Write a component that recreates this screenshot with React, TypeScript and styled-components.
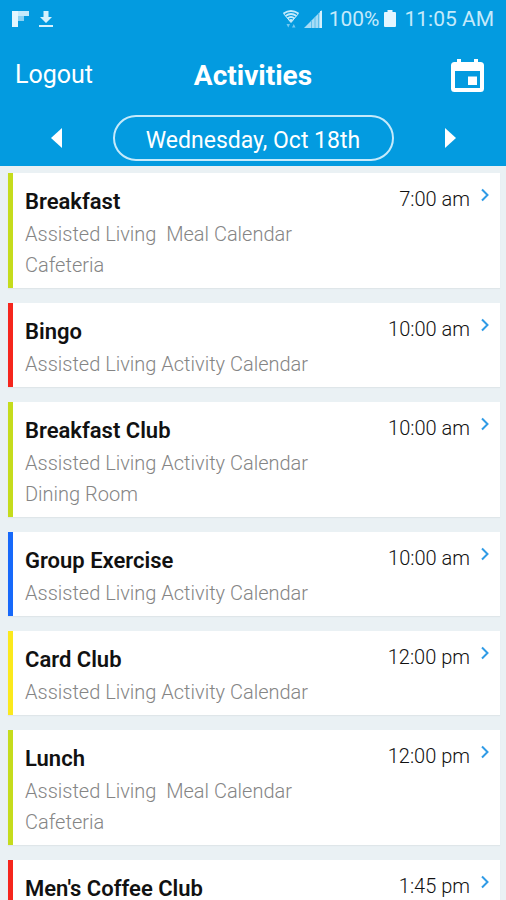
import React from "react";
import styled, { createGlobalStyle } from "styled-components";

const GlobalStyle = createGlobalStyle`
  * { box-sizing: border-box; }
  body {
    margin: 0;
    font-family: Roboto, "Liberation Sans", sans-serif;
    background: #eaf1f4;
  }
  button { font-family: inherit; }
`;

const Screen = styled.div`
  display: flex;
  flex-direction: column;
  height: 100vh;
`;

const Header = styled.header`
  flex: none;
  background: #039be0;
  color: #fff;
`;

const StatusBar = styled.div`
  display: flex;
  align-items: center;
  justify-content: space-between;
  height: 37px;
  padding: 0 12px;
  color: #c5eafb;
  font-size: 21px;
  line-height: 24px;
`;

const StatusGroup = styled.div<{ $gap: number }>`
  display: flex;
  align-items: center;
  gap: ${(p) => p.$gap}px;
`;

const Percent = styled.span`
  margin-left: 2px;
`;

const Clock = styled.span`
  margin-left: 3px;
`;

const NavBar = styled.nav`
  display: grid;
  grid-template-columns: 1fr auto 1fr;
  align-items: center;
  height: 77px;
  padding: 0 15px;
`;

const PlainButton = styled.button`
  display: flex;
  align-items: center;
  justify-content: center;
  padding: 0;
  border: 0;
  background: none;
  color: inherit;
  cursor: pointer;
`;

const LogoutButton = styled(PlainButton)`
  justify-self: start;
  padding-bottom: 1px;
  font-size: 25px;
  line-height: 32px;
`;

const CalendarButton = styled(PlainButton)`
  justify-self: end;
  padding-right: 7px;
`;

const PageTitle = styled.h1`
  margin: 0;
  font-size: 28px;
  line-height: 32px;
  font-weight: 700;
`;

const DateBar = styled.div`
  display: flex;
  align-items: center;
  justify-content: space-between;
  height: 52px;
  padding: 0 44px 4px;
`;

const ArrowButton = styled(PlainButton)`
  width: 24px;
  height: 44px;
`;

const DateButton = styled(PlainButton)`
  width: 68%;
  max-width: 281px;
  height: 46px;
  padding-top: 6px;
  border: 2px solid #c5eafb;
  border-radius: 23px;
  font-size: 23px;
  line-height: 28px;
`;

const List = styled.ul`
  flex: 1;
  min-height: 0;
  display: flex;
  flex-direction: column;
  gap: 15px;
  margin: 0;
  padding: 7px 6px 0 8px;
  list-style: none;
  overflow-y: auto;
  scrollbar-width: none;
`;

const Card = styled.li<{ $color: string }>`
  flex: none;
  display: flex;
  justify-content: space-between;
  padding: 12px 10px 7px 12px;
  border-left: 5px solid ${(p) => p.$color};
  background: #fff;
  box-shadow: 0 1px 1px #dfe6e9;
`;

const CardTitle = styled.h2`
  margin: 0;
  font-size: 22px;
  line-height: 34px;
  font-weight: 600;
  color: #111;
`;

const Detail = styled.p`
  margin: 0;
  font-size: 20px;
  line-height: 31px;
  font-weight: 300;
  color: #858585;
  white-space: pre-wrap;
`;

const When = styled.div`
  display: flex;
  align-items: flex-start;
  gap: 10px;
`;

const Time = styled.time`
  font-size: 20px;
  line-height: 28px;
  font-weight: 300;
  color: #111;
`;

const Chevron = styled.svg`
  margin-top: 3px;
`;

const COLORS = {
  meal: "#c5dc1c",
  game: "#f5261d",
  exercise: "#1769fa",
  cards: "#fbe91d",
};

const ACTIVITY = "Assisted Living Activity Calendar";
const MEAL = "Assisted Living  Meal Calendar";

const events = [
  { title: "Breakfast", time: "7:00 am", color: COLORS.meal, details: [MEAL, "Cafeteria"] },
  { title: "Bingo", time: "10:00 am", color: COLORS.game, details: [ACTIVITY] },
  { title: "Breakfast Club", time: "10:00 am", color: COLORS.meal, details: [ACTIVITY, "Dining Room"] },
  { title: "Group Exercise", time: "10:00 am", color: COLORS.exercise, details: [ACTIVITY] },
  { title: "Card Club", time: "12:00 pm", color: COLORS.cards, details: [ACTIVITY] },
  { title: "Lunch", time: "12:00 pm", color: COLORS.meal, details: [MEAL, "Cafeteria"] },
  { title: "Men's Coffee Club", time: "1:45 pm", color: COLORS.game, details: [] },
];

const FlipIcon = () => (
  <svg width="17" height="16" viewBox="0 0 17 16" aria-hidden="true">
    <path d="M0 0h6v16H0z" fill="#e3f6ff" />
    <path d="M6 0h11v5H6z" fill="#c5eafb" />
    <path d="M6 5h6v5H6z" fill="#8bd1f3" />
  </svg>
);

const DownloadIcon = () => (
  <svg width="14" height="16" viewBox="0 0 14 16" fill="#d6f1fd" aria-hidden="true">
    <path d="M4.500 0h5v6h3.500L7 12 1 6h3.500zM0 14h14v2H0z" />
  </svg>
);

const WifiIcon = () => (
  <svg width="16" height="18" viewBox="0 0 16 18" fill="none" stroke="#c5eafb" strokeWidth="1.800" aria-hidden="true">
    <path d="M.5 3.500Q8-1.500 15.500 3.500M2.500 6Q8 2 13.500 6M4.500 8.500Q8 5.500 11.500 8.500" />
    <path d="M.5 3.500L8 12.500 15.500 3.500" strokeWidth="1" />
    <path d="M5.500 10Q8 8 10.500 10L8 12.500z" fill="#c5eafb" stroke="none" />
    <path d="M3.500 14h3.500L5.250 17.500zM9 17.500h3.500L10.750 14z" fill="#74c8f0" stroke="none" />
  </svg>
);

const SignalIcon = () => (
  <svg width="18" height="18" viewBox="0 0 18 18" aria-hidden="true">
    <path d="M18 0v18H0z" fill="#a5dcf6" />
    <path d="M7.500 10.500V18M11 7V18M14.500 3.500V18" stroke="#5dbeec" strokeWidth="1" />
    <path d="M17 1v17" stroke="#d6f1fd" strokeWidth="2" />
  </svg>
);

const BatteryIcon = () => (
  <svg width="12" height="17" viewBox="0 0 12 17" fill="#e3f6ff" aria-hidden="true">
    <path d="M3.500 0h5v2H11q1 0 1 1v13q0 1-1 1H1q-1 0-1-1V3q0-1 1-1h2.500z" />
  </svg>
);

const CalendarIcon = () => (
  <svg width="33" height="33" viewBox="0 0 33 33" aria-hidden="true">
    <path
      fill="#fff"
      fillRule="evenodd"
      d="M6 0h4v3h13V0h4v3h2.500Q33 3 33 6.500V29.500Q33 33 29.500 33H3.500Q0 33 0 29.500V6.500Q0 3 3.500 3H6zM4 12V29H29V12zM17 17.500h9V26h-9z"
    />
  </svg>
);

const Triangle = ({ path }: { path: string }) => (
  <svg width="11" height="20" viewBox="0 0 11 20" fill="#fff" aria-hidden="true">
    <path d={path} />
  </svg>
);

export default function App() {
  return (
    <Screen>
      <GlobalStyle />
      <Header>
        <StatusBar>
          <StatusGroup $gap={10}>
            <FlipIcon />
            <DownloadIcon />
          </StatusGroup>
          <StatusGroup $gap={5}>
            <WifiIcon />
            <SignalIcon />
            <Percent>100%</Percent>
            <BatteryIcon />
            <Clock>11:05 AM</Clock>
          </StatusGroup>
        </StatusBar>
        <NavBar>
          <LogoutButton type="button">Logout</LogoutButton>
          <PageTitle>Activities</PageTitle>
          <CalendarButton type="button" aria-label="Open calendar">
            <CalendarIcon />
          </CalendarButton>
        </NavBar>
        <DateBar>
          <ArrowButton type="button" aria-label="Previous day">
            <Triangle path="M11 0v20L0 10z" />
          </ArrowButton>
          <DateButton type="button">Wednesday, Oct 18th</DateButton>
          <ArrowButton type="button" aria-label="Next day">
            <Triangle path="M0 0v20l11-10z" />
          </ArrowButton>
        </DateBar>
      </Header>
      <List>
        {events.map((event) => (
          <Card key={event.title} $color={event.color}>
            <div>
              <CardTitle>{event.title}</CardTitle>
              {event.details.map((line) => (
                <Detail key={line}>{line}</Detail>
              ))}
            </div>
            <When>
              <Time>{event.time}</Time>
              <Chevron width="10" height="14" viewBox="0 0 10 14" fill="none" stroke="#2f9be6" strokeWidth="2" aria-hidden="true">
                <path d="M2 1.500L7.500 7 2 12.500" />
              </Chevron>
            </When>
          </Card>
        ))}
      </List>
    </Screen>
  );
}
